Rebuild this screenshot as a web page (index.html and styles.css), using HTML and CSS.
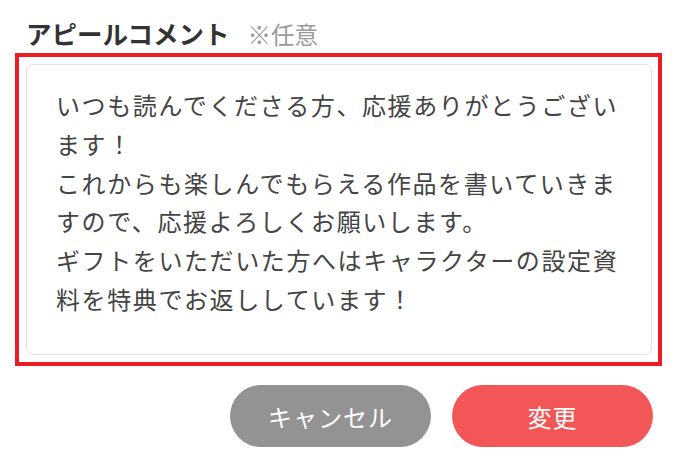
FILE: index.html
```html
<!DOCTYPE html>
<html lang="ja">
<head>
<meta charset="utf-8">
<link rel="stylesheet" href="styles.css">
</head>
<body>
<div class="page">
  <div class="header">
    <span class="title">アピールコメント</span>
    <span class="optional">※任意</span>
  </div>
  <div class="highlight">
    <div class="comment">いつも読んでくださる方、応援ありがとうござい<br>ます！<br>これからも楽しんでもらえる作品を書いていきま<br>すので、応援よろしくお願いします。<br>ギフトをいただいた方へはキャラクターの設定資<br>料を特典でお返ししています！</div>
  </div>
  <div class="actions">
    <button class="btn btn-cancel">キャンセル</button>
    <button class="btn btn-submit">変更</button>
  </div>
</div>
</body>
</html>
```

FILE: styles.css
```css
html, body {
  margin: 0;
  padding: 0;
  background: #ffffff;
}

body {
  font-family: "Noto Sans CJK JP", "Noto Sans", sans-serif;
  color: #333333;
}

.page {
  width: 682px;
  height: 470px;
  box-sizing: border-box;
  padding-top: 19px;
}

.header {
  display: flex;
  align-items: baseline;
  padding-left: 26px;
  height: 27px;
  margin-bottom: 7px;
}

.title {
  font-size: 25.5px;
  line-height: 27px;
  font-weight: 700;
  color: #333333;
}

.optional {
  font-size: 23.5px;
  line-height: 27px;
  color: #9a9a9a;
  margin-left: 18px;
}

.highlight {
  margin-left: 15px;
  width: 647px;
  box-sizing: border-box;
  border: 4px solid #ec1c24;
  padding: 7px 6px 7px 7px;
}

.comment {
  box-sizing: border-box;
  height: 291px;
  border: 1.5px solid #e3e3e3;
  border-radius: 7px;
  padding: 21px 0 0 29px;
  font-size: 24px;
  line-height: 38.8px;
  letter-spacing: 1.6px;
  color: #444444;
  white-space: nowrap;
}

.actions {
  display: flex;
  justify-content: flex-end;
  gap: 21px;
  margin-top: 19px;
  padding-right: 29px;
}

.btn {
  width: 201px;
  height: 62px;
  border: none;
  border-radius: 31px;
  font-family: "Noto Sans CJK JP", "Noto Sans", sans-serif;
  font-size: 24px;
  color: #ffffff;
  padding: 0;
  letter-spacing: 1px;
}

.btn-cancel {
  background: #939393;
}

.btn-submit {
  background: #f25656;
}
```
